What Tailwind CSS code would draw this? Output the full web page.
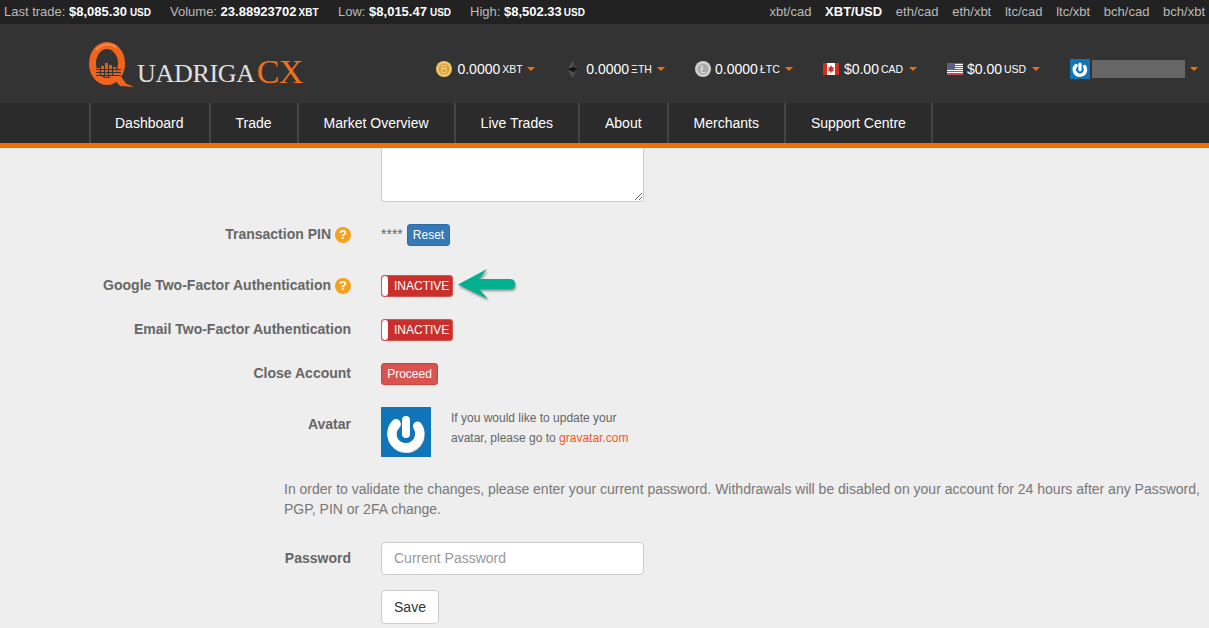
<!DOCTYPE html>
<html lang="en">
<head>
  <meta charset="UTF-8">
  <title>QuadrigaCX - Settings</title>
  <script src="https://cdn.jsdelivr.net/npm/@tailwindcss/browser@4"></script>
</head>
<body class="bg-[#eeeeee] font-['Liberation_Sans',Arial,sans-serif] text-[14px] text-[#666] overflow-hidden h-[628px]">

  <!-- ticker -->
  <div class="h-[24px] bg-[#222222] text-[#bbbbbb] text-[13px] flex items-center justify-between pl-[4px] pr-[4px]">
    <div class="flex items-baseline">
      <span class="w-[166px]">Last trade: <b class="text-white">$8,085.30</b><b class="text-white text-[10px] ml-[3px]">USD</b></span>
      <span class="w-[168px]">Volume: <b class="text-white">23.88923702</b><b class="text-white text-[10px] ml-[2px]">XBT</b></span>
      <span class="w-[132px]">Low: <b class="text-white">$8,015.47</b><b class="text-white text-[10px] ml-[3px]">USD</b></span>
      <span>High: <b class="text-white">$8,502.33</b><b class="text-white text-[10px] ml-[2px]">USD</b></span>
    </div>
    <div class="flex gap-[13.7px]">
      <span>xbt/cad</span>
      <b class="text-white">XBT/USD</b>
      <span>eth/cad</span>
      <span>eth/xbt</span>
      <span>ltc/cad</span>
      <span>ltc/xbt</span>
      <span>bch/cad</span>
      <span>bch/xbt</span>
    </div>
  </div>

  <!-- logo and balances -->
  <div class="h-[79px] bg-[#333333] flex items-center pr-[11px]">
    <div class="ml-[89px] mb-[2px] flex items-end h-[49px] shrink-0">
      <svg width="46" height="49" viewBox="0 0 46 49">
        <ellipse cx="18" cy="25.5" rx="14.5" ry="18" fill="none" stroke="#f0641e" stroke-width="7"/>
        <path d="M7 12 Q16 3 27 9" fill="none" stroke="#f58a4a" stroke-width="2"/>
        <path d="M23 39 L31 48 L45 49 L37 45.5 L31 37 Z" fill="#f0641e"/>
        <g fill="#d9601f">
          <rect x="8" y="30" width="3" height="7"/>
          <rect x="12" y="28" width="3" height="10"/>
          <rect x="16" y="25" width="3" height="14"/>
          <rect x="20" y="27" width="3" height="12"/>
          <rect x="24" y="29" width="3" height="9"/>
          <rect x="28" y="31" width="3" height="6"/>
        </g>
        <g fill="#333333">
          <rect x="7" y="31" width="25" height="1"/>
          <rect x="7" y="34" width="25" height="1"/>
          <rect x="7" y="37" width="25" height="1"/>
        </g>
      </svg>
      <span class="font-['Liberation_Serif',serif] text-[26px] leading-[26px] text-[#e0e0e0] ml-[2px] tracking-[-0.3px]">UADRIGA</span>
      <span class="font-['Liberation_Serif',serif] text-[34px] leading-[31px] text-[#f0701e] ml-[2px] tracking-[-0.8px]">CX</span>
    </div>

    <div class="ml-auto mt-[11px] flex items-center text-white text-[14px]">
      <div class="flex items-center">
        <svg width="16" height="16" viewBox="0 0 16 16"><circle cx="8" cy="8" r="8" fill="#f0c468"/><circle cx="8" cy="8" r="5.5" fill="#d9a040"/><text x="8" y="11.5" text-anchor="middle" font-size="10" font-family="Liberation Sans" fill="#f5d48c">B</text></svg>
        <span class="ml-[5px]">0.0000</span><span class="text-[10.5px] ml-[2px] mt-[1px] w-[20px]">XBT</span>
        <i class="ml-[5px] w-0 h-0 border-x-[4px] border-x-transparent border-t-[4px] border-t-[#f56f00]"></i>
      </div>
      <div class="flex items-center ml-[33px]">
        <svg width="10" height="18" viewBox="0 0 10 18"><path d="M5 0 L0 9 L5 7 Z" fill="#555"/><path d="M5 0 L9 9 L5 7 Z" fill="#3d3d3d"/><path d="M0 10 L5 18 L5 12 Z" fill="#555"/><path d="M9 10 L5 18 L5 12 Z" fill="#444"/><path d="M0 9 L5 7 L9 9 L5 12 Z" fill="#151515"/></svg>
        <span class="ml-[8px]">0.0000</span><span class="text-[10.5px] ml-[2px] mt-[1px] w-[21px]">ΞTH</span>
        <i class="ml-[5px] w-0 h-0 border-x-[4px] border-x-transparent border-t-[4px] border-t-[#f56f00]"></i>
      </div>
      <div class="flex items-center ml-[30px]">
        <svg width="16" height="16" viewBox="0 0 16 16"><circle cx="8" cy="8" r="8" fill="#d0d0d0"/><circle cx="8" cy="8" r="5.5" fill="#a9a9a9"/><text x="8" y="11.5" text-anchor="middle" font-size="10" font-family="Liberation Sans" fill="#e6e6e6">Ł</text></svg>
        <span class="ml-[4px]">0.0000</span><span class="text-[10.5px] ml-[2px] mt-[1px] w-[20px]">ŁTC</span>
        <i class="ml-[5px] w-0 h-0 border-x-[4px] border-x-transparent border-t-[4px] border-t-[#f56f00]"></i>
      </div>
      <div class="flex items-center ml-[30px]">
        <svg width="16" height="12" viewBox="0 0 16 12"><rect width="16" height="12" fill="#fff"/><rect width="4" height="12" fill="#d52b1e"/><rect x="12" width="4" height="12" fill="#d52b1e"/><path d="M8 2 L9.2 4.4 L10.8 4 L10.2 6.8 L11 7.4 L8.4 8.8 L8.4 10 L7.6 10 L7.6 8.8 L5 7.4 L5.8 6.8 L5.2 4 L6.8 4.4 Z" fill="#d52b1e"/></svg>
        <span class="ml-[5px]">$0.00</span><span class="text-[10.5px] ml-[2px] mt-[1px] w-[22px]">CAD</span>
        <i class="ml-[6px] w-0 h-0 border-x-[4px] border-x-transparent border-t-[4px] border-t-[#f56f00]"></i>
      </div>
      <div class="flex items-center ml-[30px]">
        <svg width="16" height="12" viewBox="0 0 16 12"><rect width="16" height="12" fill="#fff"/><g fill="#d0454b"><rect width="16" height="1"/><rect y="2" width="16" height="1"/><rect y="4" width="16" height="1"/><rect y="6" width="16" height="1"/><rect y="8" width="16" height="1"/><rect y="10" width="16" height="2"/></g><rect width="8" height="6" fill="#5a5f8c"/></svg>
        <span class="ml-[4px]">$0.00</span><span class="text-[10.5px] ml-[2px] mt-[1px] w-[22px]">USD</span>
        <i class="ml-[6px] w-0 h-0 border-x-[4px] border-x-transparent border-t-[4px] border-t-[#f56f00]"></i>
      </div>
      <div class="flex items-center ml-[30px]">
        <svg width="20" height="20" viewBox="0 0 50 50"><rect width="50" height="50" fill="#0f75b8"/><path d="M15 16.5 A14 14 0 1 0 36.5 19" fill="none" stroke="#fff" stroke-width="9" stroke-linecap="round"/><path d="M25 13 V27" stroke="#fff" stroke-width="8" stroke-linecap="round"/></svg>
        <div class="ml-[2px] w-[93px] h-[18px] bg-[#666666]"></div>
        <i class="ml-[5px] w-0 h-0 border-x-[4px] border-x-transparent border-t-[4px] border-t-[#f56f00]"></i>
      </div>
    </div>
  </div>

  <!-- nav -->
  <div class="h-[45px] bg-[#2b2b2b] border-b-[5px] border-[#f56f00] pl-[89px] flex text-white text-[14px]">
    <div class="border-x-2 border-[#444444] flex">
      <a class="flex items-center pl-[24px] pr-[25px] border-r-2 border-[#444444]">Dashboard</a>
      <a class="flex items-center px-[25px] border-r-2 border-[#444444]">Trade</a>
      <a class="flex items-center px-[25px] border-r-2 border-[#444444]">Market Overview</a>
      <a class="flex items-center px-[25px] border-r-2 border-[#444444]">Live Trades</a>
      <a class="flex items-center px-[25px] border-r-2 border-[#444444]">About</a>
      <a class="flex items-center px-[25px] border-r-2 border-[#444444]">Merchants</a>
      <a class="flex items-center px-[25px]">Support Centre</a>
    </div>
  </div>

  <!-- settings form -->
  <div class="pl-[381px]">
    <textarea class="block w-[263px] h-[54px] bg-white border border-t-0 border-[#cccccc] rounded-b-[4px]"></textarea>
  </div>

  <div class="mt-[22px] h-[22px] flex items-center">
    <label class="w-[351px] -mt-[1px] flex justify-end items-center font-bold">Transaction PIN
      <span class="ml-[4px] w-[16px] h-[16px] rounded-full bg-[#f7a11a] text-white text-[13px] font-bold leading-[16px] text-center">?</span>
    </label>
    <span class="ml-[30px] w-[22px] text-[14px] text-[#666] -mt-[2px]">****</span>
    <button class="ml-[4px] w-[43px] h-[22px] bg-[#337ab7] border border-[#2e6da4] rounded-[3px] text-white text-[12px]">Reset</button>
  </div>

  <div class="mt-[29px] h-[22px] flex items-center">
    <label class="w-[351px] -mt-[1px] flex justify-end items-center font-bold">Google Two-Factor Authentication
      <span class="ml-[4px] w-[16px] h-[16px] rounded-full bg-[#f7a11a] text-white text-[13px] font-bold leading-[16px] text-center">?</span>
    </label>
    <div class="ml-[30px] w-[72px] h-[22px] bg-[#c9302c] border border-[#d9534f] rounded-[3px] flex items-center text-white text-[12px]">
      <span class="w-[6px] h-[20px] bg-white rounded-[3px]"></span>
      <span class="ml-[6px]">INACTIVE</span>
    </div>
    <svg class="ml-[5px] overflow-visible drop-shadow-[1px_2px_1px_rgba(0,0,0,0.4)]" width="58" height="32" viewBox="0 0 58 32">
      <path d="M0 14.5 L29 -1 L21 9 L52 9 Q57 9 57 14 Q57 19 52 19 L21 19 L30 29 Z" fill="#00b08f"/>
    </svg>
  </div>

  <div class="mt-[22px] h-[22px] flex items-center">
    <label class="w-[351px] -mt-[1px] text-right font-bold">Email Two-Factor Authentication</label>
    <div class="ml-[30px] w-[72px] h-[22px] bg-[#c9302c] border border-[#d9534f] rounded-[3px] flex items-center text-white text-[12px]">
      <span class="w-[6px] h-[20px] bg-white rounded-[3px]"></span>
      <span class="ml-[6px]">INACTIVE</span>
    </div>
  </div>

  <div class="mt-[22px] h-[22px] flex items-center">
    <label class="w-[351px] -mt-[1px] text-right font-bold">Close Account</label>
    <button class="ml-[30px] w-[57px] h-[22px] bg-[#d9534f] border border-[#d43f3a] rounded-[3px] text-white text-[12px]">Proceed</button>
  </div>

  <div class="mt-[22px] h-[50px] flex items-start">
    <label class="w-[351px] text-right font-bold mt-[7px]">Avatar</label>
    <svg class="ml-[30px]" width="50" height="50" viewBox="0 0 50 50"><rect width="50" height="50" fill="#0f75b8"/><path d="M15 16.5 A14 14 0 1 0 36.5 19" fill="none" stroke="#cfd8e0" stroke-width="9" stroke-linecap="round" transform="translate(0.5 1)"/><path d="M15 16.5 A14 14 0 1 0 36.5 19" fill="none" stroke="#fff" stroke-width="9" stroke-linecap="round"/><path d="M25 13 V27" stroke="#fff" stroke-width="8" stroke-linecap="round"/></svg>
    <p class="ml-[20px] text-[12px] leading-[20px] mt-[1px] w-[190px]">If you would like to update your<br>avatar, please go to <a class="text-[#f15a22]">gravatar.com</a></p>
  </div>

  <p class="mt-[22px] ml-[284px] w-[925px] leading-[20px] text-[#777]">In order to validate the changes, please enter your current password. Withdrawals will be disabled on your account for 24 hours after any Password, PGP, PIN or 2FA change.</p>

  <div class="mt-[23px] h-[33px] flex items-center">
    <label class="w-[351px] text-right font-bold">Password</label>
    <input class="ml-[30px] w-[263px] h-[33px] bg-white border border-[#cccccc] rounded-[4px] px-[12px] pb-[2px] placeholder:text-[#999999]" placeholder="Current Password">
  </div>

  <div class="mt-[15px] pl-[381px]">
    <button class="w-[58px] h-[34px] bg-white border border-[#cccccc] rounded-[4px] text-[#333333] text-[14px]">Save</button>
  </div>
</body>
</html>
